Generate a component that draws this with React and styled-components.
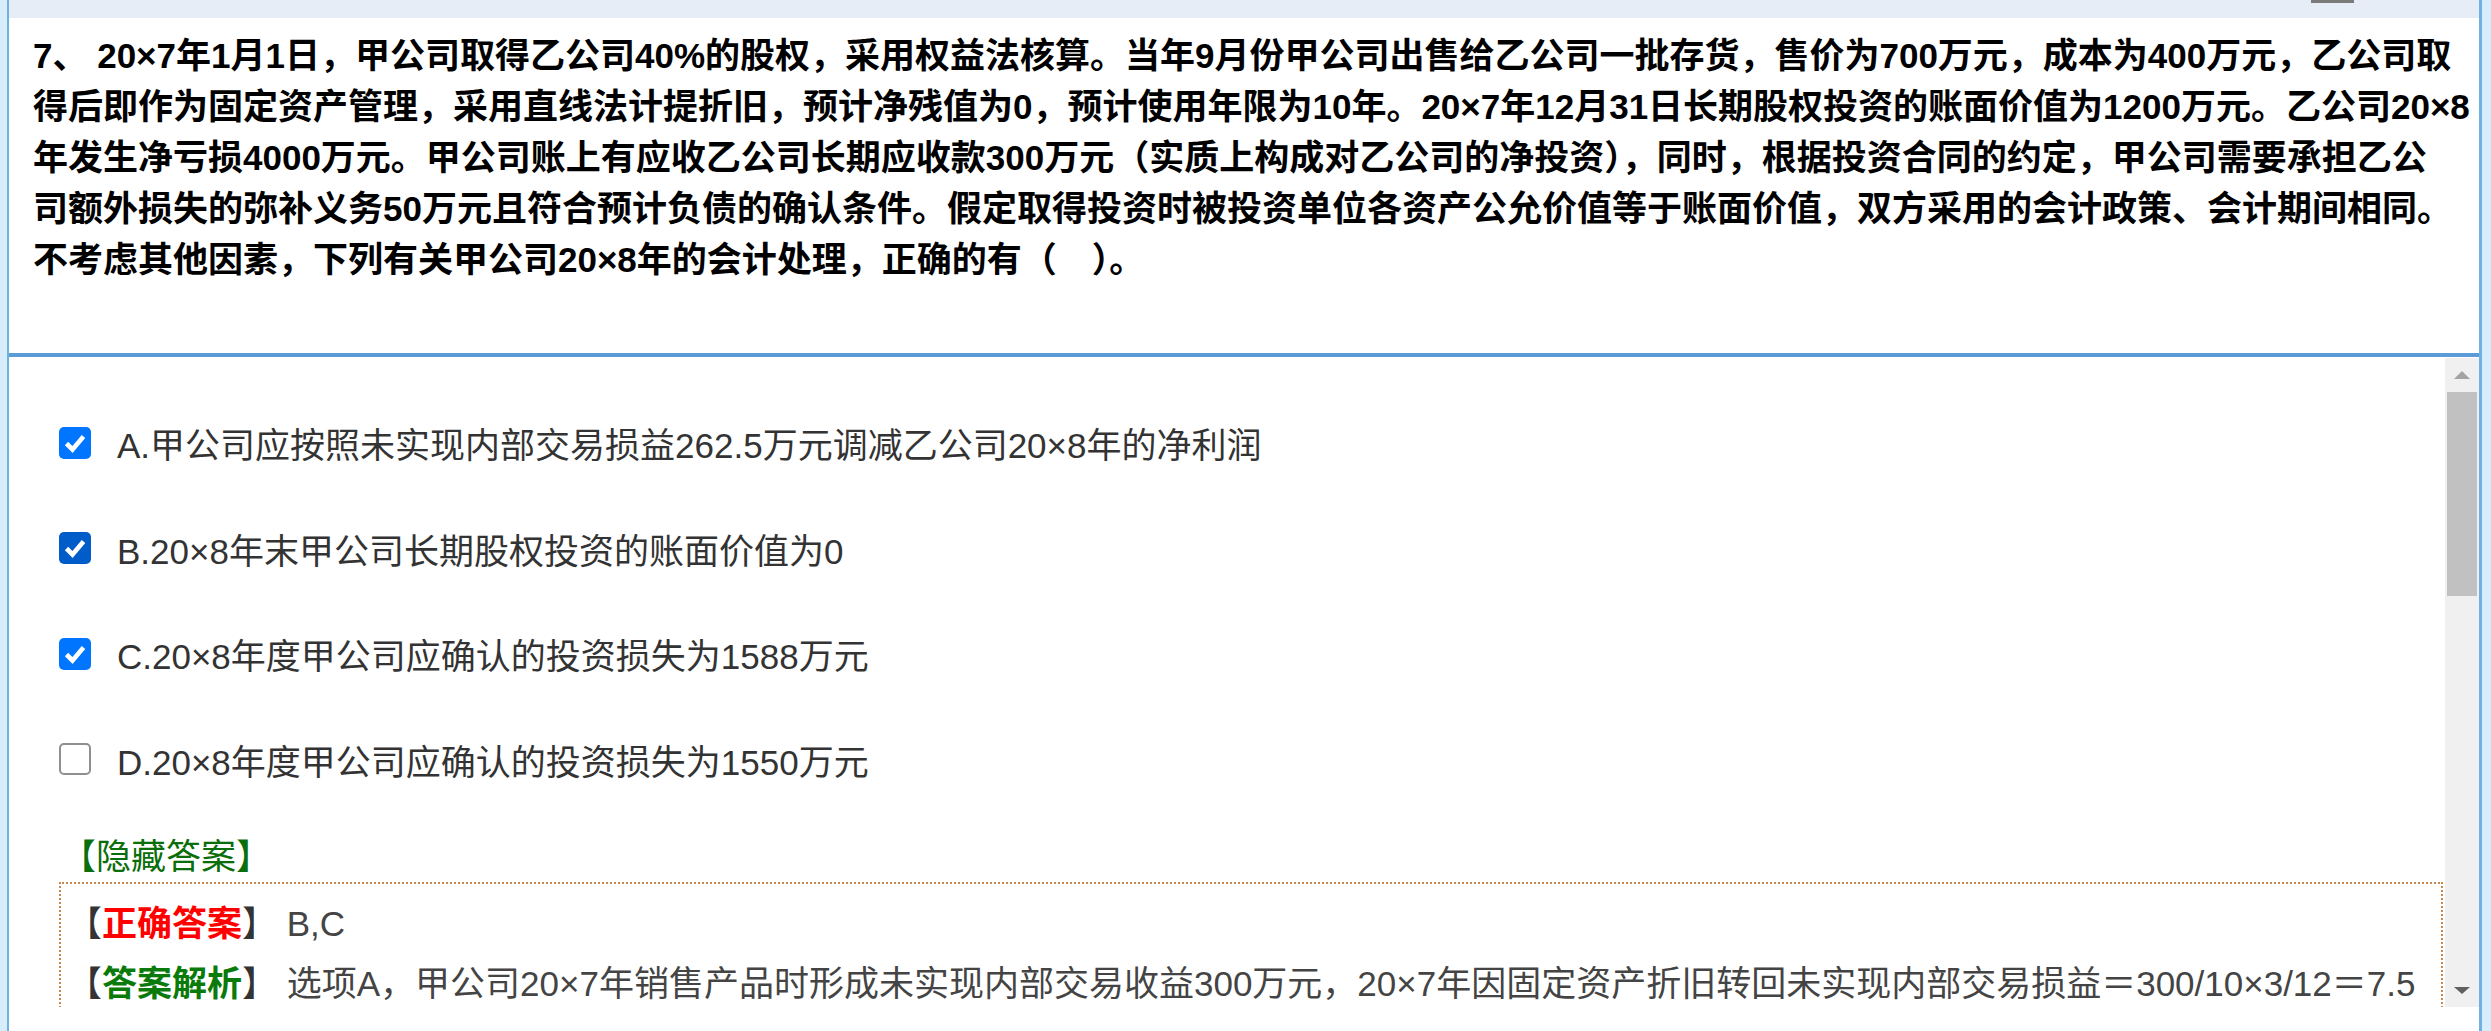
import React from "react";
import styled, { createGlobalStyle } from "styled-components";

const questionLines = [
  "7、 20×7年1月1日，甲公司取得乙公司40%的股权，采用权益法核算。当年9月份甲公司出售给乙公司一批存货，售价为700万元，成本为400万元，乙公司取",
  "得后即作为固定资产管理，采用直线法计提折旧，预计净残值为0，预计使用年限为10年。20×7年12月31日长期股权投资的账面价值为1200万元。乙公司20×8",
  "年发生净亏损4000万元。甲公司账上有应收乙公司长期应收款300万元（实质上构成对乙公司的净投资），同时，根据投资合同的约定，甲公司需要承担乙公",
  "司额外损失的弥补义务50万元且符合预计负债的确认条件。假定取得投资时被投资单位各资产公允价值等于账面价值，双方采用的会计政策、会计期间相同。",
  "不考虑其他因素，下列有关甲公司20×8年的会计处理，正确的有（　）。",
];

const options = [
  { key: "A", text: "A.甲公司应按照未实现内部交易损益262.5万元调减乙公司20×8年的净利润", checked: true },
  { key: "B", text: "B.20×8年末甲公司长期股权投资的账面价值为0", checked: true, hover: true },
  { key: "C", text: "C.20×8年度甲公司应确认的投资损失为1588万元", checked: true },
  { key: "D", text: "D.20×8年度甲公司应确认的投资损失为1550万元", checked: false },
];

const GlobalStyle = createGlobalStyle`
  html, body {
    margin: 0;
    padding: 0;
    background: #d8edfb;
  }
  body {
    font-family: "Liberation Sans", "Noto Sans CJK SC", sans-serif;
  }
`;

const Frame = styled.div`
  box-sizing: border-box;
  margin-left: 7px;
  width: 2475px;
  height: 1031px;
  background: #fff;
  border-left: 2px solid #6fb2e1;
  border-right: 3px solid #6fb2e1;
  display: flex;
  flex-direction: column;
`;

const TopBand = styled.div`
  height: 18px;
  flex: none;
  background: #e6edf6;
  display: flex;
  justify-content: flex-end;
`;

const Grip = styled.div`
  width: 43px;
  height: 3px;
  background: #7a7a7a;
  margin-right: 125px;
`;

const QuestionPanel = styled.div`
  box-sizing: border-box;
  height: 335px;
  flex: none;
  padding: 12px 0 0 24px;
  color: #000;
  font-size: 35px;
  font-weight: 700;
  line-height: 51px;
`;

const Line = styled.div`
  white-space: nowrap;
`;

const Divider = styled.div`
  height: 4px;
  flex: none;
  background: #5b9cd8;
`;

const Body = styled.div`
  height: 650px;
  flex: none;
  display: flex;
`;

const Content = styled.div`
  flex: 1;
  overflow: hidden;
  padding: 33px 2px 0 50px;
`;

const Option = styled.label`
  height: 105.5px;
  display: flex;
  align-items: center;
  gap: 26px;
  font-size: 35px;
  color: #333;
  white-space: nowrap;
`;

const Box = styled.span`
  box-sizing: border-box;
  width: 32px;
  height: 32px;
  flex: none;
  border-radius: 5px;
  display: flex;
  align-items: center;
  justify-content: center;
  background: ${(p) => (p.$checked ? (p.$hover ? "#005cc8" : "#0075ff") : "#fff")};
  border: ${(p) => (p.$checked ? "none" : "2px solid #8f8f8f")};
`;

const HiddenLabel = styled.div`
  margin-top: 20px;
  padding-left: 2px;
  height: 50px;
  line-height: 50px;
  font-size: 35px;
  color: #0a6e0a;
`;

const AnswerBox = styled.div`
  border: 2px dotted #c98a52;
  padding: 10px 0 0 6px;
  height: 400px;
`;

const AnswerLine = styled.div`
  line-height: 60px;
  font-size: 35px;
  color: #444;
  white-space: nowrap;
`;

const Tag = styled.span`
  font-weight: 700;
  color: ${(p) => p.$color};
`;

const Bracket = styled.span`
  color: #333;
`;

const ScrollBar = styled.div`
  width: 34px;
  flex: none;
  margin-top: 1px;
  background: #f0f0f0;
  display: flex;
  flex-direction: column;
`;

const Arrow = styled.div`
  height: 34px;
  flex: none;
  display: flex;
  align-items: center;
  justify-content: center;

  &::after {
    content: "";
    border-left: 8px solid transparent;
    border-right: 8px solid transparent;
    ${(p) => (p.$down ? "border-top: 7px solid #606060;" : "border-bottom: 8px solid #a3a3a3;")}
  }
`;

const Thumb = styled.div`
  height: 204px;
  margin: 0 2px;
  background: #c1c1c1;
`;

const Track = styled.div`
  flex: 1;
`;

const Check = () => (
  <svg width="32" height="32" viewBox="0 0 32 32">
    <path d="M7.5 16.5 L13.5 22.5 L24.5 9.5" fill="none" stroke="#fff" strokeWidth="4.6" />
  </svg>
);

const Tagged = ({ color, children }) => (
  <>
    <Bracket>【</Bracket>
    <Tag $color={color}>{children}</Tag>
    <Bracket>】</Bracket>
  </>
);

export default function App() {
  return (
    <>
      <GlobalStyle />
      <Frame>
        <TopBand>
          <Grip />
        </TopBand>
        <QuestionPanel>
          {questionLines.map((line, i) => (
            <Line key={i}>{line}</Line>
          ))}
        </QuestionPanel>
        <Divider />
        <Body>
          <Content>
            {options.map((o) => (
              <Option key={o.key}>
                <Box $checked={o.checked} $hover={o.hover}>
                  {o.checked && <Check />}
                </Box>
                {o.text}
              </Option>
            ))}
            <HiddenLabel>【隐藏答案】</HiddenLabel>
            <AnswerBox>
              <AnswerLine>
                <Tagged color="#ff0000">正确答案</Tagged> B,C
              </AnswerLine>
              <AnswerLine>
                <Tagged color="#0a7a0a">答案解析</Tagged> 选项A，甲公司20×7年销售产品时形成未实现内部交易收益300万元，20×7年因固定资产折旧转回未实现内部交易损益＝300/10×3/12＝7.5
              </AnswerLine>
            </AnswerBox>
          </Content>
          <ScrollBar>
            <Arrow />
            <Thumb />
            <Track />
            <Arrow $down />
          </ScrollBar>
        </Body>
      </Frame>
    </>
  );
}
